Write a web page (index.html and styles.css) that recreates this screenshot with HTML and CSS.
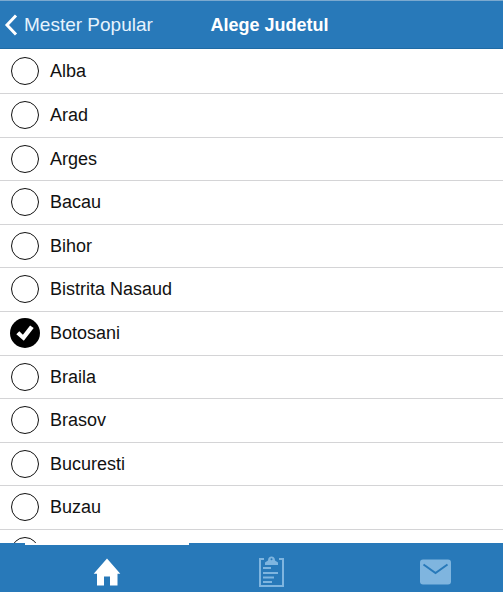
FILE: index.html
```html
<!DOCTYPE html>
<html lang="ro">
<head>
<meta charset="utf-8">
<meta name="viewport" content="width=device-width, initial-scale=1">
<title>Alege Judetul</title>
<link rel="stylesheet" href="styles.css">
</head>
<body>
<header class="navbar">
  <a class="back" href="#">
    <svg class="chevron" viewBox="0 0 14 22" aria-hidden="true"><path d="M12 1.500 3 11l9 9.500"/></svg>
    <span>Mester Popular</span>
  </a>
  <h1 class="title">Alege Judetul</h1>
</header>
<main class="content">
  <form class="list">
    <label class="row"><input type="radio" name="judet"><span>Alba</span></label>
    <label class="row"><input type="radio" name="judet"><span>Arad</span></label>
    <label class="row"><input type="radio" name="judet"><span>Arges</span></label>
    <label class="row"><input type="radio" name="judet"><span>Bacau</span></label>
    <label class="row"><input type="radio" name="judet"><span>Bihor</span></label>
    <label class="row"><input type="radio" name="judet"><span>Bistrita Nasaud</span></label>
    <label class="row"><input type="radio" name="judet" checked><span>Botosani</span></label>
    <label class="row"><input type="radio" name="judet"><span>Braila</span></label>
    <label class="row"><input type="radio" name="judet"><span>Brasov</span></label>
    <label class="row"><input type="radio" name="judet"><span>Bucuresti</span></label>
    <label class="row"><input type="radio" name="judet"><span>Buzau</span></label>
    <label class="row"><input type="radio" name="judet" aria-label="Calarasi"></label>
  </form>
</main>
<nav class="tabs">
  <a class="tab active" href="#" aria-label="Acasa">
    <svg class="icon" viewBox="0 0 32 32" aria-hidden="true"><path fill="currentColor" d="M16 2.500 29.300 17.800H26.500V29.500H19V20.500h-6v9H6V17.800H2.700z"/></svg>
  </a>
  <a class="tab" href="#" aria-label="Cereri">
    <svg class="icon" viewBox="0 0 32 32" aria-hidden="true">
      <path fill="none" stroke="currentColor" stroke-width="2" d="M9 3H5v27h23V3h-4"/>
      <path fill="currentColor" fill-rule="evenodd" d="M10 9V6.500L13 4.500C13 2 14.500.5 16.500.5S20 2 20 4.500l3 2V9zM16.500 2.200a1 1 0 1 0 0 2 1 1 0 0 0 0-2z"/>
      <path fill="none" stroke="currentColor" stroke-width="2" d="M8 12h8M8 17h15M8 21.500h11M8 26h9"/>
    </svg>
  </a>
  <a class="tab" href="#" aria-label="Mesaje">
    <svg class="icon" viewBox="0 0 32 32" aria-hidden="true">
      <rect x="1" y="3.500" width="31" height="25" rx="3" fill="currentColor"/>
      <path class="flap" d="m4.500 8.500 12 8.500 12-8.500"/>
    </svg>
  </a>
</nav>
</body>
</html>
```

FILE: styles.css
```css
* {
  box-sizing: border-box;
}

body {
  display: flex;
  flex-direction: column;
  height: 100vh;
  margin: 0;
  background: #fff;
  color: #111;
  font: 18px/22px "Liberation Sans", Arial, sans-serif;
}

.navbar {
  display: grid;
  grid-template-columns: 1fr auto 1fr;
  align-items: center;
  flex: none;
  height: 49px;
  padding: 1px 4px 0;
  border-top: 1px solid #7ba9cf;
  border-bottom: 1px solid #1f6ba5;
  background: #2879b9;
  color: #fff;
}

.back {
  display: flex;
  align-items: center;
  gap: 6px;
  color: #e6f3fd;
  font-size: 19px;
  text-decoration: none;
  white-space: nowrap;
}

.chevron {
  flex: none;
  width: 14px;
  height: 22px;
  fill: none;
  stroke: #fff;
  stroke-width: 3;
}

.title {
  margin: 0;
  padding-left: 36px;
  font-size: 18px;
  font-weight: 700;
  white-space: nowrap;
}

.content {
  flex: 1;
  min-height: 0;
  padding-top: 1px;
  overflow-y: auto;
  scrollbar-width: none;
}

.list {
  display: grid;
  grid-auto-rows: 44px 44px 43px 44px 43px;
}

.row {
  display: flex;
  align-items: center;
  gap: 10px;
  padding: 0 10px 1px;
  border-bottom: 1px solid #d4d4d6;
}

.row input {
  appearance: none;
  flex: none;
  width: 28px;
  height: 28px;
  margin: 0 1px;
  border: 1px solid #111;
  border-radius: 50%;
  background: #fff;
}

.row input:checked {
  width: 30px;
  height: 30px;
  margin: 0;
  border: 0;
  background: #000;
}

.row input:checked::before {
  content: "";
  display: block;
  height: 100%;
  background: #fff;
  clip-path: polygon(21% 54%, 31% 44%, 43% 56%, 67% 25%, 79% 33%, 46% 76%);
}

.tabs {
  display: grid;
  grid-template-columns: 164fr 164fr 150fr;
  flex: none;
  height: 49px;
  padding-left: 25px;
  background: #2879b9;
}

.tab {
  display: flex;
  align-items: center;
  justify-content: center;
  padding-top: 6px;
  border-top: 2px solid transparent;
  color: #7fb5df;
}

.tab:last-child {
  padding-left: 14px;
}

.tab.active {
  border-color: #fff;
  color: #fff;
}

.icon {
  width: 32px;
  height: 32px;
}

.flap {
  fill: none;
  stroke: #2879b9;
  stroke-width: 2;
}
```
